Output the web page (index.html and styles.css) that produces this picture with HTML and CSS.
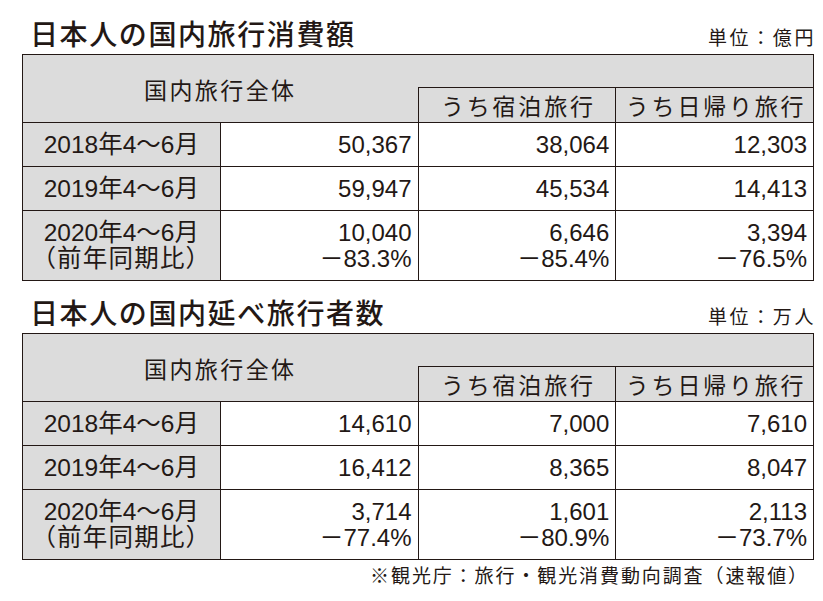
FILE: index.html
```html
<!DOCTYPE html>
<html lang="ja">
<head>
<meta charset="utf-8">
<title>日本人の国内旅行</title>
<link rel="stylesheet" href="styles.css">
</head>
<body>
<div class="page">
  <div class="head head-first">
    <h1 class="title">日本人の国内旅行消費額</h1>
    <span class="unit">単位：億円</span>
  </div>
  <table class="data">
    <colgroup><col><col><col><col></colgroup>
    <tr class="hrow1">
      <th class="main" colspan="2" rowspan="2">国内旅行全体</th>
      <th class="blank" colspan="2"></th>
    </tr>
    <tr class="hrow2">
      <th class="sub">うち宿泊旅行</th>
      <th class="sub">うち日帰り旅行</th>
    </tr>
    <tr class="row">
      <th class="label">2018年4〜6月</th>
      <td>50,367</td><td>38,064</td><td>12,303</td>
    </tr>
    <tr class="row">
      <th class="label">2019年4〜6月</th>
      <td>59,947</td><td>45,534</td><td>14,413</td>
    </tr>
    <tr class="row2">
      <th class="label">2020年4〜6月<br><span class="paren">（前年同期比）</span></th>
      <td>10,040<br><span class="pct">－83.3%</span></td>
      <td>6,646<br><span class="pct">－85.4%</span></td>
      <td>3,394<br><span class="pct">－76.5%</span></td>
    </tr>
  </table>

  <div class="head head-second">
    <h1 class="title">日本人の国内延べ旅行者数</h1>
    <span class="unit">単位：万人</span>
  </div>
  <table class="data">
    <colgroup><col><col><col><col></colgroup>
    <tr class="hrow1">
      <th class="main" colspan="2" rowspan="2">国内旅行全体</th>
      <th class="blank" colspan="2"></th>
    </tr>
    <tr class="hrow2">
      <th class="sub">うち宿泊旅行</th>
      <th class="sub">うち日帰り旅行</th>
    </tr>
    <tr class="row">
      <th class="label">2018年4〜6月</th>
      <td>14,610</td><td>7,000</td><td>7,610</td>
    </tr>
    <tr class="row">
      <th class="label">2019年4〜6月</th>
      <td>16,412</td><td>8,365</td><td>8,047</td>
    </tr>
    <tr class="row2">
      <th class="label">2020年4〜6月<br><span class="paren">（前年同期比）</span></th>
      <td>3,714<br><span class="pct">－77.4%</span></td>
      <td>1,601<br><span class="pct">－80.9%</span></td>
      <td>2,113<br><span class="pct">－73.7%</span></td>
    </tr>
  </table>
  <p class="source">※観光庁：旅行・観光消費動向調査（速報値）</p>
</div>
</body>
</html>
```
FILE: styles.css
```css
html, body {
  margin: 0;
  padding: 0;
  background: #ffffff;
}

body {
  font-family: "Liberation Sans", "Noto Sans CJK JP", sans-serif;
  color: #231815;
}

.page {
  width: 792px;
  padding-left: 22px;
}

.head {
  display: flex;
  justify-content: space-between;
  align-items: baseline;
}

.head-first {
  height: 54px;
}

.head-second {
  height: 52px;
}

.title {
  margin: 0;
  padding-left: 8px;
  font-family: "Noto Sans CJK JP", sans-serif;
  font-weight: 500;
  font-size: 28px;
  letter-spacing: 1.6px;
  line-height: 32px;
  margin-top: 17px;
}

.head-second .title {
  margin-top: 15px;
}

.unit {
  font-family: "Noto Sans CJK JP", sans-serif;
  font-size: 19px;
  letter-spacing: 2.6px;
  margin-right: -2px;
}

.data {
  width: 792px;
  table-layout: fixed;
  border-collapse: collapse;
}

.data th,
.data td {
  border: 1.5px solid #231815;
  padding: 0;
  font-weight: 400;
}

.data th {
  background: #dcdcdc;
}

.main {
  font-family: "Noto Sans CJK JP", sans-serif;
  font-size: 23px;
  letter-spacing: 2.4px;
  padding-left: 2px;
  text-align: center;
  vertical-align: middle;
  border-right: none !important;
}

.blank {
  border-left: none !important;
  border-bottom: none !important;
}

.hrow1 {
  height: 33px;
}

.hrow2 {
  height: 35px;
}

.sub {
  font-family: "Noto Sans CJK JP", sans-serif;
  font-size: 23px;
  letter-spacing: 2.8px;
  text-align: center;
  padding-left: 3px !important;
  line-height: 30px;
}

.row {
  height: 44px;
}

.row2 {
  height: 70px;
}

.label {
  font-size: 24.5px;
  text-align: center;
  line-height: 26px;
}

.paren {
  letter-spacing: 1.2px;
}

.data td {
  background: #ffffff;
  text-align: right;
  font-size: 24px;
  line-height: 26px;
  padding-right: 6px;
}

.pct {
  letter-spacing: 0;
}

.source {
  margin: 3px 0 0;
  text-align: right;
  font-family: "Noto Sans CJK JP", sans-serif;
  font-size: 19px;
  letter-spacing: 1.9px;
  padding-right: 5px;
  line-height: 24px;
}
```
